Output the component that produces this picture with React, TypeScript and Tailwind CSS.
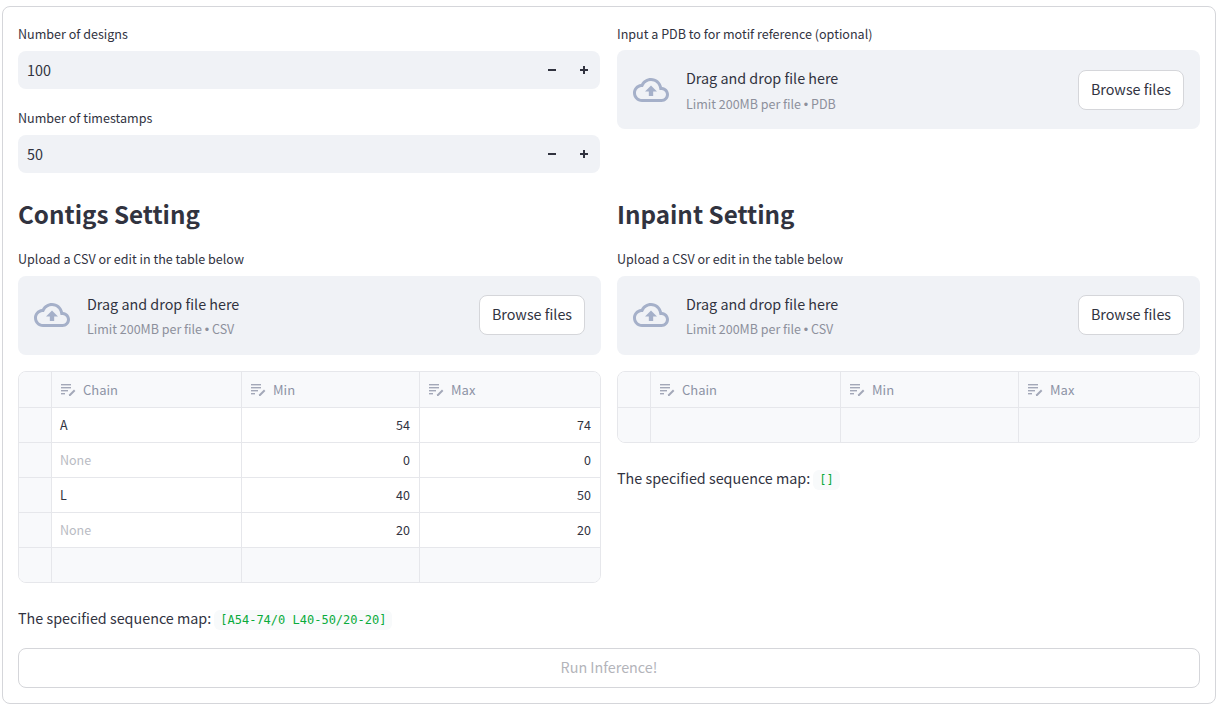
const font = "[font-family:'Noto_Sans_CJK_SC','Noto_Sans',sans-serif]";

function CloudIcon() {
  return (
    <svg viewBox="0 0 24 24" className="h-9 w-9 shrink-0 fill-[#a5b0c9]">
      <path d="M19.35 10.04C18.67 6.59 15.64 4 12 4 9.11 4 6.6 5.64 5.35 8.04 2.34 8.36 0 10.91 0 14c0 3.31 2.69 6 6 6h13c2.76 0 5-2.24 5-5 0-2.64-2.05-4.78-4.65-4.96zM19 18H6c-2.21 0-4-1.79-4-4 0-2.05 1.53-3.76 3.56-3.97l1.07-.11.5-.95C8.08 7.14 9.94 6 12 6c2.62 0 4.88 1.86 5.39 4.43l.3 1.5 1.53.11c1.56.1 2.78 1.41 2.78 2.96 0 1.65-1.35 3-3 3zM8 13h2.55v3h2.9v-3H16l-4-4z" />
    </svg>
  );
}

function EditIcon() {
  return (
    <svg viewBox="0 0 16 16" className="h-4 w-4 shrink-0 fill-[#a3a8b8]">
      <rect x="1" y="2" width="10" height="1.4" />
      <rect x="1" y="5" width="10" height="1.4" />
      <rect x="1" y="8" width="7" height="1.4" />
      <rect x="1" y="11" width="4" height="1.4" />
      <path d="M14 7.6l1.4 1.4-5 5H9v-1.4z" />
    </svg>
  );
}

function NumberInput({ label, value }: { label: string; value: string }) {
  return (
    <div>
      <div className="h-[22px] text-[12.55px] leading-[22px] text-[#31333f]">{label}</div>
      <div className="mr-px mt-[6px] flex h-[38px] items-center justify-between rounded-lg bg-[#f0f2f6] pl-[9px] text-[14.35px] text-[#31333f]">
        <span>{value}</span>
        <div className="flex">
          <span className="flex h-[38px] w-8 items-center justify-center">
            <svg viewBox="0 0 10 10" className="h-2.5 w-2.5 fill-[#31333f]"><rect x="1" y="4" width="8" height="2" /></svg>
          </span>
          <span className="flex h-[38px] w-8 items-center justify-center">
            <svg viewBox="0 0 10 10" className="h-2.5 w-2.5 fill-[#31333f]"><path d="M1 4h3V1h2v3h3v2H6v3H4V6H1z" /></svg>
          </span>
        </div>
      </div>
    </div>
  );
}

function Uploader({ label, kind, top = false }: { label: string; kind: string; top?: boolean }) {
  return (
    <div>
      <div className="h-[22px] text-[12.55px] leading-[22px] text-[#31333f]">{label}</div>
      <div className={`${top ? "mt-[5px]" : "mt-[6px] pb-[2px]"} flex h-[79px] items-center justify-between rounded-lg bg-[#f0f2f6] px-4`}>
        <div className="flex items-center gap-[17px]">
          <CloudIcon />
          <div className={top ? "mt-[2px]" : "mt-[3px]"}>
            <div className="text-[14.35px] leading-6 text-[#31333f]">Drag and drop file here</div>
            <div className={`${top ? "mt-[3px]" : "mt-[2px]"} text-[12.5px] leading-[21px] text-[#8d909c]`}>
              Limit 200MB per file <span className="font-['Liberation_Sans',sans-serif]">•</span> {kind}
            </div>
          </div>
        </div>
        <button className="h-10 w-[106px] rounded-lg border border-[#d5d6da] bg-white pb-[2px] text-[14.35px] text-[#31333f]">
          Browse files
        </button>
      </div>
    </div>
  );
}

const rowClass = "grid grid-cols-[32px_190px_178px_1fr]";

function Grid({ rows }: { rows: { chain: string; min: string; max: string }[] }) {
  return (
    <div className="overflow-hidden rounded-lg border border-[#e6e7eb] text-[12.5px] text-[#31333f]">
      <div className={`${rowClass} h-[35px] bg-[#f8f9fb] text-[13px] text-[#8d93a5]`}>
        <div />
        {["Chain", "Min", "Max"].map((name) => (
          <div key={name} className="flex items-center gap-[7px] border-l border-[#e6e7eb] pl-2">
            <EditIcon />
            <span>{name}</span>
          </div>
        ))}
      </div>
      {rows.map((row, idx) => {
        const empty = row.chain === "" && row.min === "";
        const cell = `flex items-center border-l border-[#e6e7eb] pl-2 pr-[9px] ${empty ? "bg-[#f8f9fb]" : "bg-white"}`;
        return (
          <div key={idx} className={`${rowClass} h-[35px] border-t border-[#e6e7eb]`}>
            <div className="bg-[#f8f9fb]" />
            <div className={cell}>
              <span className={row.chain === "None" ? "text-[#b9bbc3]" : ""}>{row.chain}</span>
            </div>
            <div className={`${cell} justify-end`}>{row.min}</div>
            <div className={`${cell} justify-end`}>{row.max}</div>
          </div>
        );
      })}
    </div>
  );
}

function SeqMap({ value }: { value: string }) {
  return (
    <div className="flex h-6 items-center text-[14.35px] leading-6 text-[#31333f]">
      <span>The specified sequence map:</span>
      <code className="ml-[3px] mt-1 rounded-md bg-[#f8fafb] px-[6px] py-[2px] font-['DejaVu_Sans_Mono',monospace] text-[12px] leading-4 text-[#09ab3b]">
        {value}
      </code>
    </div>
  );
}

export default function App() {
  return (
    <div className={`${font} h-[707px] bg-white px-[2px] pb-[3px] pt-[6px]`}>
      <div className="h-full rounded-lg border border-[#d5d6da] px-[15px] pt-[16px]">
        <div className="grid grid-cols-2 gap-x-4">
          <div>
            <NumberInput label="Number of designs" value="100" />
            <div className="mt-[18px]">
              <NumberInput label="Number of timestamps" value="50" />
            </div>
          </div>
          <div>
            <Uploader label="Input a PDB to for motif reference (optional)" kind="PDB" top />
          </div>
        </div>

        <div className="mt-[21px] grid grid-cols-2 gap-x-4">
          <div>
            <h2 className="h-[42px] text-[24.2px] font-semibold leading-[40px] text-[#31333f]">Contigs Setting</h2>
            <div className="mt-3">
              <Uploader label="Upload a CSV or edit in the table below" kind="CSV" />
            </div>
            <div className="mt-4">
              <Grid
                rows={[
                  { chain: "A", min: "54", max: "74" },
                  { chain: "None", min: "0", max: "0" },
                  { chain: "L", min: "40", max: "50" },
                  { chain: "None", min: "20", max: "20" },
                  { chain: "", min: "", max: "" },
                ]}
              />
            </div>
            <div className="mt-[23px]">
              <SeqMap value="[A54-74/0 L40-50/20-20]" />
            </div>
          </div>
          <div>
            <h2 className="h-[42px] text-[24.2px] font-semibold leading-[40px] text-[#31333f]">Inpaint Setting</h2>
            <div className="mt-3">
              <Uploader label="Upload a CSV or edit in the table below" kind="CSV" />
            </div>
            <div className="mt-4">
              <Grid rows={[{ chain: "", min: "", max: "" }]} />
            </div>
            <div className="mt-[23px]">
              <SeqMap value="[]" />
            </div>
          </div>
        </div>

        <button className="mt-[18px] h-10 w-full rounded-lg border border-[#d5d6da] bg-white pb-[2px] text-[14.35px] text-[#b3b4ba]">
          Run Inference!
        </button>
      </div>
    </div>
  );
}
